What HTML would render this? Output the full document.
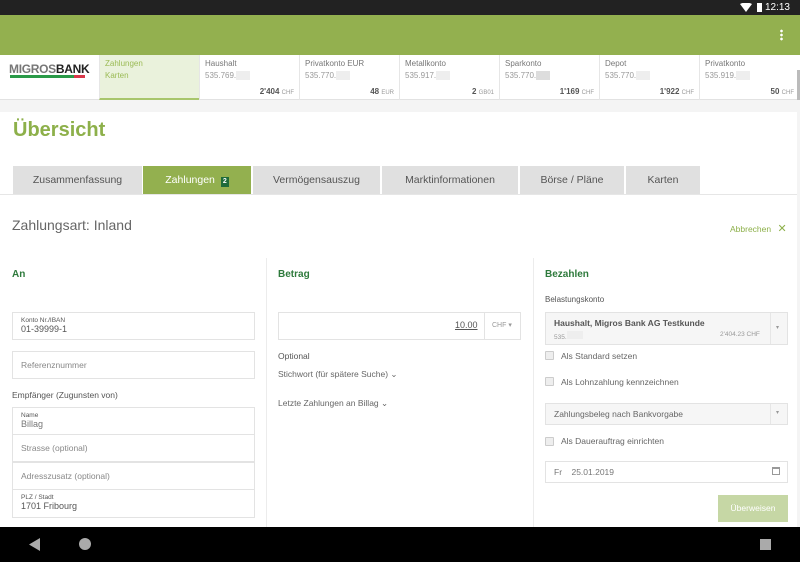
<!DOCTYPE html>
<html><head><meta charset="utf-8"><style>
*{box-sizing:border-box;margin:0;padding:0}
body{width:800px;height:562px;overflow:hidden;font-family:"Liberation Sans",sans-serif;background:#f4f4f4;position:relative;color:#555}
.abs{position:absolute}
.status{left:0;top:0;width:800px;height:15px;background:#222;color:#fff;font-size:10px}
.appbar{left:0;top:15px;width:800px;height:40px;background:#93b04f}
.strip{left:0;top:55px;width:800px;height:45px;background:#fff;border-bottom:1px solid #e2e2e2}
.tile{position:absolute;top:0;width:100px;height:45px;border-left:1px solid #e6e6e6;font-size:8px;color:#777;padding:4px 5px}
.tile .n{margin-top:3px;color:#999}
.tile .n span{display:inline-block;width:14px;height:9px;background:#eee;vertical-align:middle}
.tile .a{position:absolute;right:5px;bottom:4px;font-weight:bold;color:#555}
.tile .a small{font-weight:normal;font-size:6px;color:#999}
.card{left:0;top:112px;width:797px;height:415px;background:#fff}
.tab{position:absolute;top:166px;height:28px;background:#e0e0e0;font-size:10.5px;color:#555;text-align:center;line-height:28px}
.input{position:absolute;border:1px solid #e3e3e3;background:#fff;font-size:8.5px;color:#888;padding-left:8px}
.lbl{font-size:6.5px;color:#555;margin-top:4px}
.val{font-size:9px;color:#555}
.g{color:#8db04a}
.h{font-size:10px;color:#2e7a3c;font-weight:bold}
.cb{position:absolute;width:9px;height:9px;border:1px solid #ccc;background:#eee;border-radius:1px}
.t{position:absolute;font-size:8.5px;color:#666}
</style></head><body>
<div class="abs status"><span style="position:absolute;right:10px;top:2px">12:13</span>
<svg class="abs" style="left:740px;top:3px" width="12" height="9"><path d="M0 1 Q6 -2 12 1 L6 9Z" fill="#fff"/></svg>
<div class="abs" style="left:757px;top:3px;width:5px;height:9px;background:#fff"></div></div>
<div class="abs appbar"><div class="abs" style="right:17px;top:14px;width:3px;height:12px;background:radial-gradient(circle,#fff 1.2px,transparent 1.5px) 0 0/3px 4px"></div></div>
<div class="abs strip">
<div class="abs" style="left:9px;top:7px;font-size:12px;font-weight:bold;color:#777;letter-spacing:-.3px">MIGROS<span style="color:#222">BANK</span></div>
<div class="abs" style="left:10px;top:20px;width:64px;height:3px;background:#2a9a48"></div>
<div class="abs" style="left:74px;top:20px;width:11px;height:3px;background:#d8384a"></div>
<div class="tile" style="left:99px;background:#eaf2dc;border-bottom:2px solid #a8c66c;color:#9bbb55">Zahlungen<br><div style="margin-top:3px">Karten</div></div>
<div class="tile" style="left:199px">Haushalt<div class="n">535.769.<span></span></div><div class="a">2'404 <small>CHF</small></div></div>
<div class="tile" style="left:299px">Privatkonto EUR<div class="n">535.770.<span></span></div><div class="a">48 <small>EUR</small></div></div>
<div class="tile" style="left:399px">Metallkonto<div class="n">535.917.<span></span></div><div class="a">2 <small>GB01</small></div></div>
<div class="tile" style="left:499px">Sparkonto<div class="n">535.770.<span style="background:#ddd"></span></div><div class="a">1'169 <small>CHF</small></div></div>
<div class="tile" style="left:599px">Depot<div class="n">535.770.<span></span></div><div class="a">1'922 <small>CHF</small></div></div>
<div class="tile" style="left:699px">Privatkonto<div class="n">535.919.<span></span></div><div class="a">50 <small>CHF</small></div></div>
</div>
<div class="abs" style="left:797px;top:70px;width:3px;height:30px;background:#bbb"></div>
<div class="abs card"></div>
<div class="abs" style="left:13px;top:119px;font-size:20px;color:#8db04a;font-weight:bold">Übersicht</div>
<div class="tab" style="left:13px;width:129px">Zusammenfassung</div>
<div class="tab" style="left:143px;width:108px;background:#93b04f;color:#fff">Zahlungen <span style="display:inline-block;background:#1e6b3a;color:#fff;font-size:7px;line-height:10px;padding:0 2px;font-weight:bold;margin-left:3px">2</span></div>
<div class="tab" style="left:253px;width:127px">Vermögensauszug</div>
<div class="tab" style="left:382px;width:136px">Marktinformationen</div>
<div class="tab" style="left:520px;width:104px">Börse / Pläne</div>
<div class="tab" style="left:626px;width:74px">Karten</div>
<div class="abs" style="left:0;top:194px;width:797px;height:1px;background:#e6e6e6"></div>
<div class="abs" style="left:12px;top:217px;font-size:14px;color:#666">Zahlungsart: Inland</div>
<div class="abs g" style="left:730px;top:222px;font-size:8.5px">Abbrechen <span style="font-size:11px;margin-left:4px">✕</span></div>
<div class="abs" style="left:266px;top:258px;width:1px;height:269px;background:#ececec"></div>
<div class="abs" style="left:533px;top:258px;width:1px;height:269px;background:#ececec"></div>
<div class="abs h" style="left:12px;top:269px">An</div>
<div class="abs h" style="left:278px;top:269px">Betrag</div>
<div class="abs h" style="left:545px;top:269px">Bezahlen</div>
<div class="input" style="left:12px;top:312px;width:243px;height:28px"><div class="lbl">Konto Nr./IBAN</div><div class="val">01-39999-1</div></div>
<div class="input" style="left:12px;top:351px;width:243px;height:28px;line-height:26px">Referenznummer</div>
<div class="t" style="left:12px;top:390px;color:#555">Empfänger (Zugunsten von)</div>
<div class="input" style="left:12px;top:407px;width:243px;height:28px"><div class="lbl">Name</div><div class="val" style="color:#777">Billag</div></div>
<div class="input" style="left:12px;top:434px;width:243px;height:28px;line-height:26px">Strasse (optional)</div>
<div class="input" style="left:12px;top:462px;width:243px;height:28px;line-height:26px">Adresszusatz (optional)</div>
<div class="input" style="left:12px;top:489px;width:243px;height:29px"><div class="lbl">PLZ / Stadt</div><div class="val">1701 Fribourg</div></div>
<div class="input" style="left:278px;top:312px;width:243px;height:28px"></div>
<div class="abs" style="left:484px;top:313px;width:1px;height:26px;background:#e3e3e3"></div>
<div class="t" style="left:455px;top:320px;color:#555;font-size:9px;text-decoration:underline">10.00</div>
<div class="t" style="left:492px;top:321px;font-size:7px;color:#999">CHF ▾</div>
<div class="t" style="left:278px;top:351px;color:#555">Optional</div>
<div class="t g" style="left:278px;top:369px">Stichwort (für spätere Suche) ⌄</div>
<div class="t g" style="left:278px;top:398px">Letzte Zahlungen an Billag ⌄</div>
<div class="t" style="left:545px;top:295px;font-size:8px;color:#555">Belastungskonto</div>
<div class="input" style="left:545px;top:312px;width:243px;height:33px;background:#f6f6f6;padding-left:8px"><div style="font-size:8.5px;color:#555;margin-top:5px;font-weight:bold">Haushalt, Migros Bank AG Testkunde</div><div style="font-size:6.5px;color:#999;margin-top:3px">535.<span style="display:inline-block;width:16px;height:8px;background:#eee"></span><span style="position:absolute;left:174px">2'404.23 CHF</span></div></div>
<div class="abs" style="left:770px;top:313px;width:1px;height:31px;background:#e6e6e6"></div>
<div class="t" style="left:776px;top:324px;font-size:6px;color:#999">▾</div>
<div class="cb" style="left:545px;top:351px"></div><div class="t" style="left:561px;top:351px">Als Standard setzen</div>
<div class="cb" style="left:545px;top:377px"></div><div class="t" style="left:561px;top:377px">Als Lohnzahlung kennzeichnen</div>
<div class="input" style="left:545px;top:403px;width:243px;height:22px;background:#f6f6f6;line-height:20px;color:#666">Zahlungsbeleg nach Bankvorgabe</div>
<div class="abs" style="left:770px;top:404px;width:1px;height:20px;background:#e6e6e6"></div>
<div class="t" style="left:776px;top:409px;font-size:6px;color:#999">▾</div>
<div class="cb" style="left:545px;top:437px"></div><div class="t" style="left:561px;top:436px">Als Dauerauftrag einrichten</div>
<div class="input" style="left:545px;top:461px;width:243px;height:22px;line-height:20px;color:#777">Fr &nbsp;&nbsp;&nbsp;25.01.2019</div>
<div class="abs" style="left:772px;top:467px;width:8px;height:8px;border:1px solid #999;border-top-width:2px"></div>
<div class="abs" style="left:718px;top:495px;width:70px;height:27px;background:#c6d7a5;color:#fff;font-size:8.5px;text-align:center;line-height:27px">Überweisen</div>
<div class="abs" style="left:0;top:527px;width:800px;height:35px;background:#000"></div>
<svg class="abs" style="left:29px;top:538px" width="12" height="13"><path d="M11 0 L11 13 L0 6.5Z" fill="#aaa"/></svg>
<div class="abs" style="left:79px;top:538px;width:12px;height:12px;border-radius:50%;background:#aaa"></div>
<div class="abs" style="left:760px;top:539px;width:11px;height:11px;background:#aaa"></div>
</body></html>
